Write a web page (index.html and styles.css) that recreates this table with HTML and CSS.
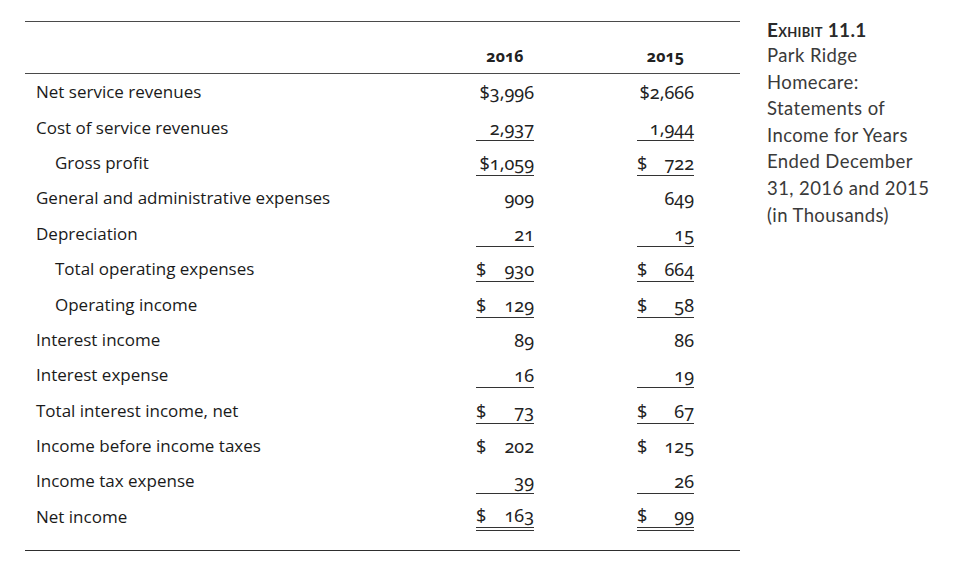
FILE: index.html
```html
<!DOCTYPE html>
<html lang="en">
<head>
<meta charset="utf-8">
<title>Exhibit 11.1</title>
<link rel="stylesheet" href="styles.css">
</head>
<body>
<div class="page">
  <section class="statement">
    <div class="head">
      <span class="label"></span>
      <span class="year">2016</span>
      <span class="year">2015</span>
    </div>
    <div class="row">
      <span class="label">Net service revenues</span>
      <span class="num"><span class="amt">$3,996</span></span>
      <span class="num"><span class="amt">$2,666</span></span>
    </div>
    <div class="row">
      <span class="label">Cost of service revenues</span>
      <span class="num line"><span class="amt">2,937</span></span>
      <span class="num line"><span class="amt">1,944</span></span>
    </div>
    <div class="row">
      <span class="label indent">Gross profit</span>
      <span class="num line"><span class="amt">$1,059</span></span>
      <span class="num line"><span class="cur">$</span><span class="amt">722</span></span>
    </div>
    <div class="row">
      <span class="label">General and administrative expenses</span>
      <span class="num"><span class="amt">909</span></span>
      <span class="num"><span class="amt">649</span></span>
    </div>
    <div class="row">
      <span class="label">Depreciation</span>
      <span class="num line"><span class="amt">21</span></span>
      <span class="num line"><span class="amt">15</span></span>
    </div>
    <div class="row">
      <span class="label indent">Total operating expenses</span>
      <span class="num line"><span class="cur">$</span><span class="amt">930</span></span>
      <span class="num line"><span class="cur">$</span><span class="amt">664</span></span>
    </div>
    <div class="row">
      <span class="label indent">Operating income</span>
      <span class="num line"><span class="cur">$</span><span class="amt">129</span></span>
      <span class="num line"><span class="cur">$</span><span class="amt">58</span></span>
    </div>
    <div class="row">
      <span class="label">Interest income</span>
      <span class="num"><span class="amt">89</span></span>
      <span class="num"><span class="amt">86</span></span>
    </div>
    <div class="row">
      <span class="label">Interest expense</span>
      <span class="num line"><span class="amt">16</span></span>
      <span class="num line"><span class="amt">19</span></span>
    </div>
    <div class="row">
      <span class="label">Total interest income, net</span>
      <span class="num line"><span class="cur">$</span><span class="amt">73</span></span>
      <span class="num line"><span class="cur">$</span><span class="amt">67</span></span>
    </div>
    <div class="row">
      <span class="label">Income before income taxes</span>
      <span class="num"><span class="cur">$</span><span class="amt">202</span></span>
      <span class="num"><span class="cur">$</span><span class="amt">125</span></span>
    </div>
    <div class="row">
      <span class="label">Income tax expense</span>
      <span class="num line"><span class="amt">39</span></span>
      <span class="num line"><span class="amt">26</span></span>
    </div>
    <div class="row">
      <span class="label">Net income</span>
      <span class="num double"><span class="cur">$</span><span class="amt">163</span></span>
      <span class="num double"><span class="cur">$</span><span class="amt">99</span></span>
    </div>
  </section>
  <aside class="caption">
    <p class="exhibit">Exhibit 11.1</p>
    <p class="title">Park Ridge Homecare: Statements of Income for Years Ended December 31, 2016 and 2015 (in Thousands)</p>
  </aside>
</div>
</body>
</html>
```

FILE: styles.css
```css
* { box-sizing: border-box; }

html, body {
  margin: 0;
  padding: 0;
  background: #ffffff;
}

.page {
  display: flex;
  align-items: flex-start;
  padding: 21px 0 0 25px;
  gap: 27px;
}

.statement {
  width: 715px;
  border-top: 1px solid #4a4a4a;
  border-bottom: 1px solid #2e2e2e;
  padding-bottom: 16px;
  color: #222222;
}

.head,
.row {
  display: grid;
  grid-template-columns: 451px 58px 103px 57px;
  align-items: center;
}

.head {
  height: 52px;
  border-bottom: 1px solid #4a4a4a;
  align-items: end;
  padding-bottom: 6px;
}

.year {
  font-family: "Noto Sans", sans-serif;
  font-weight: 700;
  font-size: 16px;
  font-variant-numeric: oldstyle-nums;
  text-align: center;
  color: #222222;
}

.head .year:nth-child(3),
.row .num:nth-child(3) {
  grid-column: 4;
}

.row {
  height: 35.4px;
}

.label {
  padding-left: 11px;
  font-family: "Open Sans", sans-serif;
  font-size: 17px;
  color: #1a1a1a;
}

.label.indent {
  padding-left: 30px;
}

.num {
  display: flex;
  align-items: baseline;
  font-family: "Noto Sans", sans-serif;
  font-size: 18px;
  font-variant-numeric: oldstyle-nums;
  line-height: 20px;
  padding-bottom: 2px;
  margin-top: 4px;
  color: #222222;
  border-bottom: 1px solid transparent;
}

.amt {
  margin-left: auto;
}

.num.line {
  border-bottom: 1px solid #333333;
}

.num.double {
  border-bottom: 4px double #333333;
}

.caption {
  font-family: "Lato", sans-serif;
  color: #3a3a3a;
  font-size: 18.5px;
  letter-spacing: 0.4px;
  line-height: 26.6px;
  width: 168px;
  margin-top: -4px;
}

.caption p {
  margin: 0;
}

.exhibit {
  font-weight: 700;
  font-size: 19px;
  font-variant: small-caps;
  letter-spacing: 0.3px;
  color: #2a2a2a;
  line-height: 25px;
}
```
